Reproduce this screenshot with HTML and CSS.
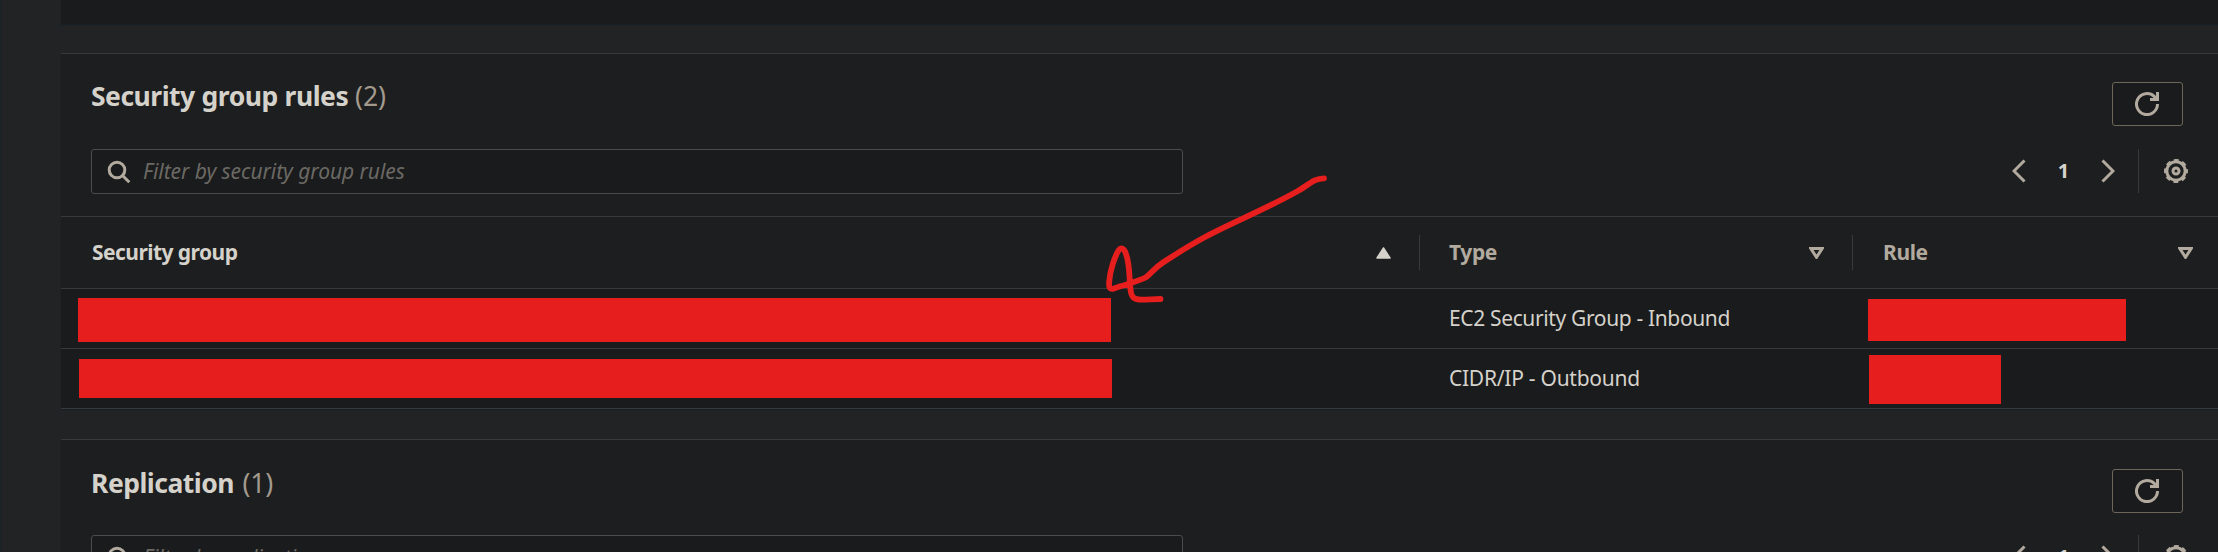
FILE: index.html
```html
<!DOCTYPE html>
<html lang="en">
<head>
<meta charset="utf-8">
<title>Security group rules</title>
<link rel="stylesheet" href="styles.css">
</head>
<body>
<svg class="defs" width="0" height="0">
  <symbol id="search" viewBox="0 0 24 24"><circle cx="10" cy="10" r="7.8"/><path d="M15.5 15.5l6.8 6.8"/></symbol>
  <symbol id="refresh" viewBox="0 0 24 24"><path d="M22.5 12A10.5 10.5 0 1 1 19.2 4.4L21 6.6M22.5 0v7.5H15"/></symbol>
  <symbol id="prev" viewBox="0 0 14 24"><path d="M12.500 1.500L2 12l10.500 10.500"/></symbol>
  <symbol id="next" viewBox="0 0 14 24"><path d="M1.500 1.500L12 12 1.500 22.500"/></symbol>
  <symbol id="gear" viewBox="0 0 24 24"><circle cx="12" cy="12" r="9.200"/><circle cx="12" cy="12" r="10.800" stroke-width="2.400" stroke-dasharray="4.800 3.682" stroke-dashoffset="2.400"/><circle cx="12" cy="12" r="3"/></symbol>
  <symbol id="sort" viewBox="0 0 15 12"><path d="M1.800 1.500h11.400L7.500 10.300z"/></symbol>
</svg>
<main class="page">
  <section class="panel panel-previous"></section>

  <section class="panel panel-rules">
    <header class="panel-head">
      <h2 class="title">Security group rules <span class="count">(2)</span></h2>
      <button class="refresh"><svg class="icon" width="24" height="24"><use href="#refresh"/></svg></button>
    </header>
    <div class="tools">
      <div class="filter"><svg class="icon" width="24" height="24"><use href="#search"/></svg><span class="placeholder">Filter by security group rules</span></div>
      <nav class="pager">
        <svg class="icon" width="14" height="24"><use href="#prev"/></svg>
        <b class="page-number">1</b>
        <svg class="icon" width="14" height="24"><use href="#next"/></svg>
        <span class="settings"><svg class="icon" width="24" height="24"><use href="#gear"/></svg></span>
      </nav>
    </div>
    <div class="row row-head">
      <div class="cell sorted"><span class="label label-group">Security group</span><svg class="arrow-up" width="15" height="12"><path d="M7.500 1L14 11H1z"/></svg></div>
      <div class="cell"><span class="label label-type">Type</span><svg class="icon" width="15" height="12"><use href="#sort"/></svg></div>
      <div class="cell"><span class="label label-rule">Rule</span><svg class="icon" width="15" height="12"><use href="#sort"/></svg></div>
    </div>
    <div class="row">
      <div class="cell"><span class="mask mask-group-1"></span></div>
      <div class="cell"><span class="value value-inbound">EC2 Security Group - Inbound</span></div>
      <div class="cell"><span class="mask mask-rule-1"></span></div>
    </div>
    <div class="row">
      <div class="cell"><span class="mask mask-group-2"></span></div>
      <div class="cell"><span class="value value-outbound">CIDR/IP - Outbound</span></div>
      <div class="cell"><span class="mask mask-rule-2"></span></div>
    </div>
  </section>

  <section class="panel">
    <header class="panel-head panel-head-replication">
      <h2 class="title title-replication">Replication <span class="count">(1)</span></h2>
      <button class="refresh"><svg class="icon" width="24" height="24"><use href="#refresh"/></svg></button>
    </header>
    <div class="tools">
      <div class="filter"><svg class="icon" width="24" height="24"><use href="#search"/></svg><span class="placeholder">Filter by replication</span></div>
      <nav class="pager">
        <svg class="icon" width="14" height="24"><use href="#prev"/></svg>
        <b class="page-number">1</b>
        <svg class="icon" width="14" height="24"><use href="#next"/></svg>
        <span class="settings"><svg class="icon" width="24" height="24"><use href="#gear"/></svg></span>
      </nav>
    </div>
  </section>
</main>
<svg class="annotation" width="230" height="140" viewBox="1100 170 230 140"><path d="M1324 178.300C1313 178.500 1309 185 1297 191.500C1264 210 1233 222 1206 236.500C1190 245 1176 254 1163 262.500C1153 269 1150 275 1145 277.800C1137 282 1124 284.500 1114 288.500C1109.500 290 1108.500 287 1109.300 281C1110 271 1114.500 257 1118.500 250.500C1121 247 1124 248 1126 254C1130 265 1129 277 1130.500 289C1131 296 1133 299 1138.500 299.500C1144 300 1153 299 1160.500 299"/></svg>
</body>
</html>
```
FILE: styles.css
```css
* { box-sizing: border-box; }
body {
  margin: 0;
  height: 552px;
  overflow: hidden;
  background: #222324;
  color: #d5d2cb;
  font: 21px/30px "Noto Sans", "Open Sans", sans-serif;
}
.defs { position: absolute; }
.page {
  height: 552px;
  overflow: hidden;
  padding-left: 59px;
  border-left: 2px solid #1b2326;
  display: flex;
  flex-direction: column;
  gap: 29px;
}
.panel {
  flex: none;
  background: #1d1e1f;
  border-top: 1px solid #38393b;
  box-shadow: 0 1px 1px #162027;
}
.panel-previous { height: 24px; border: 0; background: #1a1b1c; }
.panel-rules { margin-bottom: 1px; }
.panel-head {
  height: 95px;
  padding: 28px 35px 0 30px;
  display: flex;
  justify-content: space-between;
  align-items: flex-start;
}
.panel-head-replication { padding-top: 29px; }
.title {
  margin: -4px 0 0;
  font-size: 26.500px;
  line-height: 36px;
  font-weight: 700;
  letter-spacing: -0.500px;
  word-spacing: 0.500px;
  white-space: pre;
}
.title-replication { word-spacing: 2px; }
.count { font-weight: 400; letter-spacing: -0.100px; color: #a39a8d; }
.refresh {
  width: 71px;
  height: 44px;
  padding: 0 1px 0 0;
  display: grid;
  place-items: center;
  border: 1px solid #6e665a;
  border-radius: 3px;
  background: #1a1b1c;
}
.icon { fill: none; stroke: #b2aa9e; stroke-width: 3; flex: none; }
.tools {
  height: 67px;
  padding: 0 30px;
  display: flex;
  justify-content: space-between;
  align-items: flex-start;
}
.filter {
  width: 1092px;
  height: 45px;
  padding-left: 15px;
  display: flex;
  align-items: center;
  gap: 12px;
  border: 1px solid #4b4c4e;
  border-radius: 3px;
  background: #1a1b1c;
}
.placeholder { padding-bottom: 2px; color: #6b6964; font-style: italic; letter-spacing: -0.060px; white-space: nowrap; }
.pager { height: 44px; display: flex; align-items: center; }
.page-number { width: 75px; text-align: center; font-size: 20px; }
.settings {
  height: 44px;
  margin-left: 23px;
  padding-left: 25px;
  display: flex;
  align-items: center;
  border-left: 1px solid #38393b;
}
.row {
  height: 60px;
  display: grid;
  grid-template-columns: 1359px 433px 1fr;
  align-items: center;
  background: #1a1b1c;
  border-bottom: 1px solid #38393b;
}
.row-head {
  height: 73px;
  background: #1d1e1f;
  border-top: 1px solid #38393b;
  color: #b2aa9e;
  font-weight: 700;
}
.cell { padding-left: 30px; display: flex; align-items: center; white-space: nowrap; }
.row-head .cell { height: 35px; padding-right: 28px; justify-content: space-between; border-right: 1px solid #38393b; }
.row-head .cell:last-child { border: 0; padding-right: 25px; }
.sorted { color: #d5d2cb; }
.arrow-up { fill: #d5d2cb; stroke: #d5d2cb; stroke-linejoin: round; stroke-width: 1.500; }
.label { padding-bottom: 2px; }
.label-group { padding-left: 1px; letter-spacing: -0.550px; }
.label-type { margin-left: -1px; letter-spacing: -0.400px; }
.label-rule { letter-spacing: -0.400px; }
.value { padding-bottom: 1px; margin-left: -1px; }
.value-inbound { letter-spacing: -0.360px; }
.value-outbound { letter-spacing: -0.260px; }
.mask { background: #e61e1e; }
.mask-group-1 { width: 1033px; height: 44px; margin: 2px 0 0 -13px; }
.mask-group-2 { width: 1033px; height: 39px; margin-left: -12px; }
.mask-rule-1 { width: 258px; height: 42px; margin: 2px 0 0 -15px; }
.mask-rule-2 { width: 132px; height: 49px; margin: 2px 0 0 -14px; }
.annotation {
  position: absolute;
  left: 1100px;
  top: 170px;
  fill: none;
  stroke: #e61e1e;
  stroke-width: 5.800;
  stroke-linecap: round;
  stroke-linejoin: round;
}
```
